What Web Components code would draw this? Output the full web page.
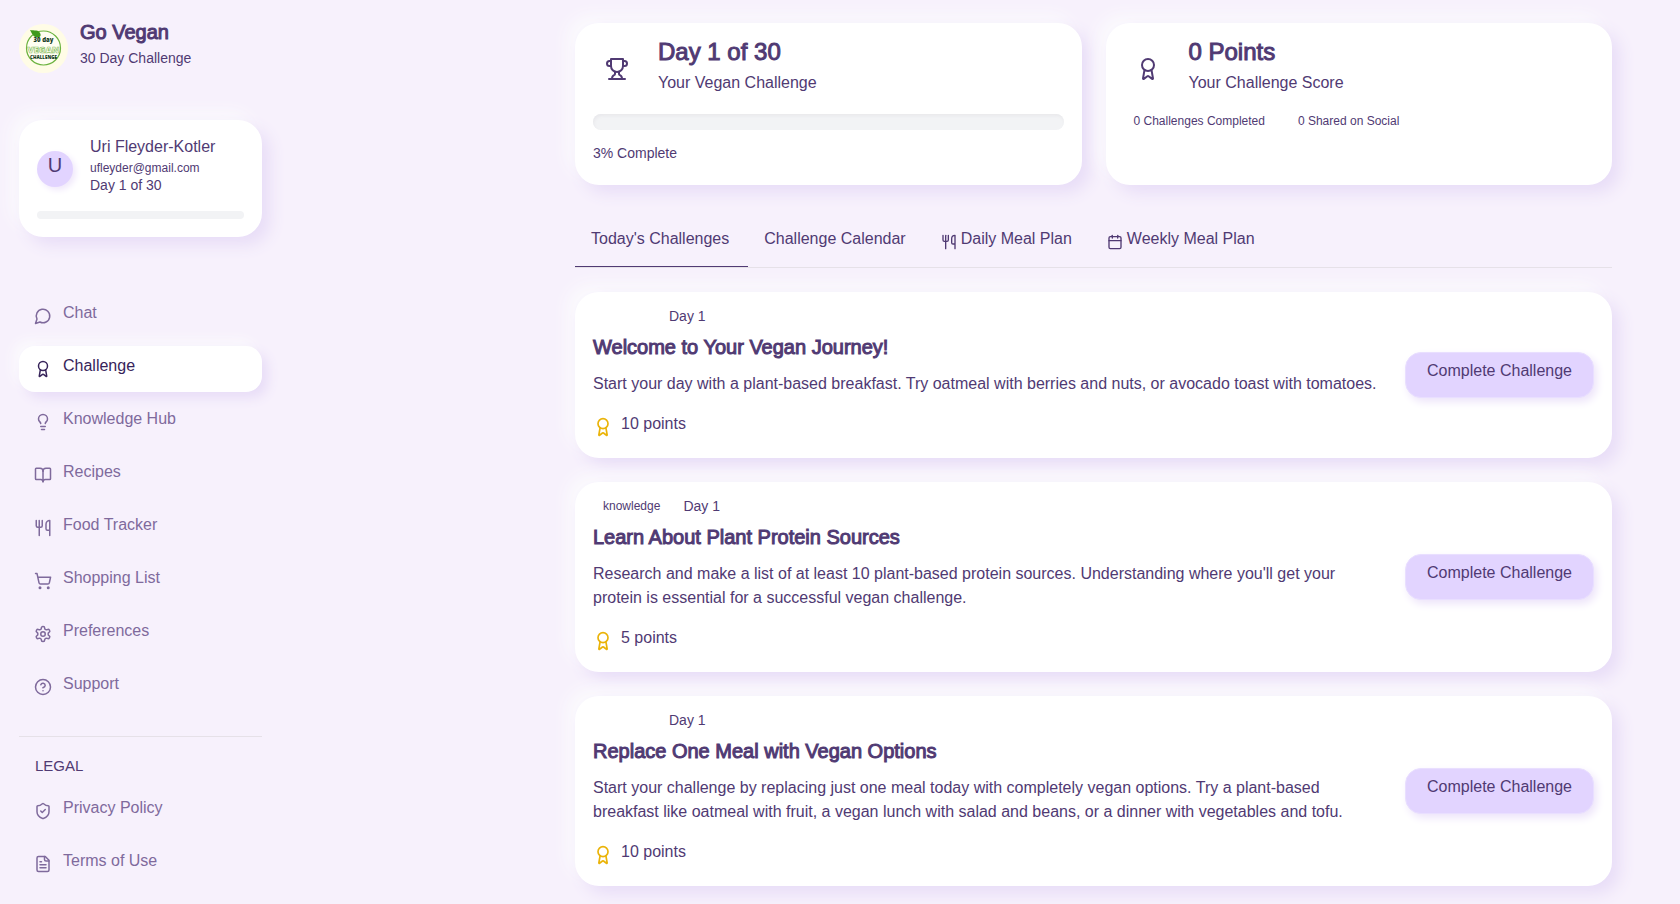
<!DOCTYPE html>
<html lang="en">
<head>
<meta charset="utf-8">
<title>Go Vegan - 30 Day Challenge</title>
<style>
	:root {
		--bg: #f7f1fc;
		--ink: #503a73;
		--ink-dark: #37245a;
		--muted: #7f6a9c;
		--accent: #e2d4ff;
		--line: #e6e1e8;
		--track: #f2f3f5;
		--gold: #eab308;
		--raised: 8px 8px 16px #e8ddf7, -8px -8px 16px #fbfafd;
	}
	body {
		margin: 0;
		background: var(--bg);
		color: var(--ink);
		font: 16px/24px "Liberation Sans", Arial, sans-serif;
		overflow: hidden;
	}
</style>
</head>
<body>
<vegan-app>
	<app-sidebar slot="sidebar">
		<profile-card slot="profile" initial="U" email="ufleyder@gmail.com" day="Day 1 of 30">Uri Fleyder-Kotler</profile-card>
		<nav-item icon="chat">Chat</nav-item>
		<nav-item icon="award" active>Challenge</nav-item>
		<nav-item icon="bulb">Knowledge Hub</nav-item>
		<nav-item icon="book">Recipes</nav-item>
		<nav-item icon="utensils">Food Tracker</nav-item>
		<nav-item icon="cart">Shopping List</nav-item>
		<nav-item icon="settings">Preferences</nav-item>
		<nav-item icon="help">Support</nav-item>
		<nav-item slot="legal" icon="shield">Privacy Policy</nav-item>
		<nav-item slot="legal" icon="file">Terms of Use</nav-item>
	</app-sidebar>

	<stat-card slot="stats" icon="trophy" heading="Day 1 of 30" label="Your Vegan Challenge">
		<progress-track></progress-track>
		<small-note>3% Complete</small-note>
	</stat-card>
	<stat-card slot="stats" icon="award" heading="0 Points" label="Your Challenge Score">
		<badge-row>
			<pill-badge>0 Challenges Completed</pill-badge>
			<pill-badge>0 Shared on Social</pill-badge>
		</badge-row>
	</stat-card>

	<tab-bar slot="tabs">
		<tab-item active>Today's Challenges</tab-item>
		<tab-item>Challenge Calendar</tab-item>
		<tab-item icon="utensils">Daily Meal Plan</tab-item>
		<tab-item icon="calendar">Weekly Meal Plan</tab-item>
	</tab-bar>

	<challenge-card heading="Welcome to Your Vegan Journey!" day="Day 1" points="10 points">Start your day with a plant-based breakfast. Try oatmeal with berries and nuts, or avocado toast with tomatoes.</challenge-card>
	<challenge-card category="knowledge" heading="Learn About Plant Protein Sources" day="Day 1" points="5 points">Research and make a list of at least 10 plant-based protein sources. Understanding where you'll get your protein is essential for a successful vegan challenge.</challenge-card>
	<challenge-card heading="Replace One Meal with Vegan Options" day="Day 1" points="10 points">Start your challenge by replacing just one meal today with completely vegan options. Try a plant-based breakfast like oatmeal with fruit, a vegan lunch with salad and beans, or a dinner with vegetables and tofu.</challenge-card>
</vegan-app>

<script>
// 24x24 stroke icons
const ICONS = {
	chat: '<path d="M7.9 20A9 9 0 1 0 4 16.1L2 22Z"/>',
	award: '<circle cx="12" cy="8" r="6"/><path d="m15.477 12.89 1.515 8.526a.5.5 0 0 1-.81.47l-3.58-2.687a1 1 0 0 0-1.197 0l-3.586 2.686a.5.5 0 0 1-.81-.469l1.514-8.526"/>',
	bulb: '<path d="M15 14c.2-1 .7-1.7 1.5-2.5 1-.9 1.5-2.2 1.5-3.5A6 6 0 0 0 6 8c0 1 .2 2.2 1.5 3.5.7.7 1.3 1.5 1.5 2.5"/><path d="M9 18h6"/><path d="M10 22h4"/>',
	book: '<path d="M12 7v14"/><path d="M3 18a1 1 0 0 1-1-1V4a1 1 0 0 1 1-1h5a4 4 0 0 1 4 4 4 4 0 0 1 4-4h5a1 1 0 0 1 1 1v13a1 1 0 0 1-1 1h-6a3 3 0 0 0-3 3 3 3 0 0 0-3-3z"/>',
	utensils: '<path d="M3 2v7c0 1.100.9 2 2 2h4a2 2 0 0 0 2-2V2"/><path d="M7 2v20"/><path d="M21 15V2a5 5 0 0 0-5 5v6c0 1.100.9 2 2 2h3Zm0 0v7"/>',
	cart: '<circle cx="8" cy="21" r="1"/><circle cx="19" cy="21" r="1"/><path d="M2.050 2.050h2l2.660 12.420a2 2 0 0 0 2 1.580h9.780a2 2 0 0 0 1.950-1.570l1.650-7.430H5.120"/>',
	settings: '<path d="M12.220 2h-.44a2 2 0 0 0-2 2v.18a2 2 0 0 1-1 1.730l-.43.25a2 2 0 0 1-2 0l-.15-.08a2 2 0 0 0-2.730.73l-.22.38a2 2 0 0 0 .73 2.730l.15.1a2 2 0 0 1 1 1.720v.51a2 2 0 0 1-1 1.740l-.15.09a2 2 0 0 0-.73 2.730l.22.38a2 2 0 0 0 2.730.73l.15-.08a2 2 0 0 1 2 0l.43.25a2 2 0 0 1 1 1.730V20a2 2 0 0 0 2 2h.44a2 2 0 0 0 2-2v-.18a2 2 0 0 1 1-1.730l.43-.25a2 2 0 0 1 2 0l.15.08a2 2 0 0 0 2.730-.73l.22-.39a2 2 0 0 0-.73-2.730l-.15-.08a2 2 0 0 1-1-1.740v-.5a2 2 0 0 1 1-1.740l.15-.09a2 2 0 0 0 .73-2.730l-.22-.38a2 2 0 0 0-2.730-.73l-.15.08a2 2 0 0 1-2 0l-.43-.25a2 2 0 0 1-1-1.730V4a2 2 0 0 0-2-2z"/><circle cx="12" cy="12" r="3"/>',
	help: '<circle cx="12" cy="12" r="10"/><path d="M9.090 9a3 3 0 0 1 5.830 1c0 2-3 3-3 3"/><path d="M12 17h.01"/>',
	shield: '<path d="M20 13c0 5-3.500 7.500-7.660 8.950a1 1 0 0 1-.67-.01C7.500 20.500 4 18 4 13V6a1 1 0 0 1 1-1c2 0 4.500-1.200 6.240-2.720a1.170 1.170 0 0 1 1.520 0C14.510 3.810 17 5 19 5a1 1 0 0 1 1 1z"/><path d="m9 12 2 2 4-4"/>',
	file: '<path d="M15 2H6a2 2 0 0 0-2 2v16a2 2 0 0 0 2 2h12a2 2 0 0 0 2-2V7Z"/><path d="M14 2v4a2 2 0 0 0 2 2h4"/><path d="M10 9H8"/><path d="M16 13H8"/><path d="M16 17H8"/>',
	trophy: '<path d="M6 9H4.500a2.500 2.500 0 0 1 0-5H6"/><path d="M18 9h1.500a2.500 2.500 0 0 0 0-5H18"/><path d="M4 22h16"/><path d="M10 14.660V17c0 .55-.47.98-.97 1.210C7.850 18.750 7 20.240 7 22"/><path d="M14 14.660V17c0 .55.47.98.97 1.210C16.150 18.750 17 20.240 17 22"/><path d="M18 2H6v7a6 6 0 0 0 12 0V2Z"/>',
	calendar: '<path d="M8 2v4"/><path d="M16 2v4"/><rect width="18" height="18" x="3" y="4" rx="2"/><path d="M3 10h18"/>',
};

function icon(name, size) {
	return `<svg width="${size}" height="${size}" viewBox="0 0 24 24" fill="none" stroke="currentColor" stroke-width="2" stroke-linecap="round" stroke-linejoin="round" aria-hidden="true">${ICONS[name]}</svg>`;
}

// sets up the shadow root from whatever render() returns
class BaseElement extends HTMLElement {
	constructor() {
		super();
		this.attachShadow({ mode: "open" });
	}
	connectedCallback() {
		this.shadowRoot.innerHTML = this.render();
	}
	attr(name) {
		return this.getAttribute(name) || "";
	}
}

class VeganApp extends BaseElement {
	render() {
		return `
			<style>
				:host {
					display: flex;
					min-height: 100vh;
				}
				main {
					flex: 1;
					min-width: 0;
					padding: 23px 68px 24px 294px;
				}
				.stats {
					display: grid;
					grid-template-columns: 1fr 1fr;
					gap: 24px;
				}
				.list {
					display: flex;
					flex-direction: column;
					gap: 24px;
					margin-top: 24px;
				}
			</style>
			<slot name="sidebar"></slot>
			<main>
				<div class="stats"><slot name="stats"></slot></div>
				<slot name="tabs"></slot>
				<div class="list"><slot></slot></div>
			</main>
			`;
	}
}

class AppSidebar extends BaseElement {
	render() {
		return `
			<style>
				:host {
					display: block;
					box-sizing: border-box;
					width: 281px;
					padding: 20px 19px 0;
				}
				.brand {
					display: flex;
					align-items: center;
					gap: 12px;
				}
				.brand svg {
					margin-top: 2px;
				}
				h1 {
					margin: 0 0 2px;
					font-size: 20px;
					font-weight: 400;
					-webkit-text-stroke: 1px;
				}
				p {
					margin: 0;
					padding-bottom: 4px;
					font-size: 14px;
				}
				nav {
					display: flex;
					flex-direction: column;
					gap: 7px;
					margin-top: 56px;
				}
				hr {
					margin: 26px 0 17px;
					border: 0;
					border-top: 1px solid var(--line);
				}
				h2 {
					margin: 0;
					padding-left: 16px;
					font-size: 15px;
					font-weight: 400;
				}
				nav.legal {
					margin-top: 10px;
				}
			</style>
			<div class="brand">
				<svg width="49" height="49" viewBox="0 0 49 49" role="img" aria-label="30 day vegan challenge">
					<circle cx="24.500" cy="24.500" r="24.500" fill="#fffce6"/>
					<circle cx="24.500" cy="24" r="17" fill="#fffef2" stroke="#6cb33f" stroke-width="1.200"/>
					<path d="M11 6c4 1 9-1 10.500 4 .5 2-.5 3-2 3.500C14 14 13 9 11 6z" fill="#3f9a1d"/>
					<g font-family="Open Sans, sans-serif" text-anchor="middle" font-weight="800">
						<text x="24.500" y="18" font-size="6" fill="#123a1c">30 day</text>
						<text x="24.500" y="28.500" font-size="9" fill="#fffef2" stroke="#8fc26a" stroke-width=".7">VEGAN</text>
						<text x="24.500" y="35" font-size="4.500" fill="#123a1c">CHALLENGE</text>
					</g>
				</svg>
				<div>
					<h1>Go Vegan</h1>
					<p>30 Day Challenge</p>
				</div>
			</div>
			<slot name="profile"></slot>
			<nav aria-label="Main"><slot></slot></nav>
			<hr>
			<h2>LEGAL</h2>
			<nav class="legal" aria-label="Legal"><slot name="legal"></slot></nav>
			`;
	}
}

class ProfileCard extends BaseElement {
	render() {
		return `
			<style>
				:host {
					display: block;
					margin-top: 46px;
					padding: 15px 18px 18px;
					border-radius: 24px;
					background: #fff;
					box-shadow: var(--raised);
				}
				.row {
					display: flex;
					align-items: center;
					gap: 17px;
				}
				.avatar {
					width: 36px;
					height: 36px;
					margin-top: 10px;
					border-radius: 50%;
					background: var(--accent);
					box-shadow: 3px 3px 6px #f0e8fb;
					font-size: 20px;
					line-height: 28px;
					text-align: center;
				}
				.email {
					font-size: 12px;
					line-height: 18px;
				}
				.day {
					font-size: 14px;
					line-height: 16px;
				}
				progress-track {
					--size: 8px;
					--inset: none;
					margin-top: 18px;
				}
			</style>
			<div class="row">
				<div class="avatar">${this.attr("initial")}</div>
				<div>
					<div><slot></slot></div>
					<div class="email">${this.attr("email")}</div>
					<div class="day">${this.attr("day")}</div>
				</div>
			</div>
			<progress-track></progress-track>
			`;
	}
}

class ProgressTrack extends BaseElement {
	render() {
		return `
			<style>
				:host {
					display: block;
					height: var(--size, 16px);
					border-radius: 8px;
					background: var(--track);
					box-shadow: var(--inset, inset 1px 2px 3px #e9e9ec);
				}
			</style>
			`;
	}
}

class NavItem extends BaseElement {
	render() {
		return `
			<style>
				:host {
					display: block;
				}
				a {
					display: flex;
					align-items: center;
					gap: 11px;
					height: 46px;
					padding: 0 15px;
					border-radius: 16px;
					color: var(--muted);
					text-decoration: none;
				}
				:host([active]) a {
					background: #fff;
					color: var(--ink-dark);
					box-shadow: 6px 6px 12px #e8ddf7, -6px -6px 12px #fbfafd;
				}
				span {
					padding-bottom: 7px;
				}
			</style>
			<a href="#"${this.hasAttribute("active") ? ' aria-current="page"' : ""}>${icon(this.attr("icon"), 18)}<span><slot></slot></span></a>
			`;
	}
}

class StatCard extends BaseElement {
	render() {
		return `
			<style>
				:host {
					display: block;
					box-sizing: border-box;
					min-height: 162px;
					padding: 13px 18px 18px;
					border-radius: 24px;
					background: #fff;
					box-shadow: var(--raised);
				}
				.top {
					display: flex;
					align-items: center;
					gap: 17px;
					margin-bottom: 16px;
				}
				.icon {
					display: flex;
					justify-content: center;
					width: 48px;
					padding-top: 4px;
				}
				h2 {
					margin: 0;
					font-size: 24px;
					line-height: 32px;
					font-weight: 400;
					-webkit-text-stroke: 1px;
				}
				p {
					margin: 0;
					line-height: 30px;
				}
			</style>
			<div class="top">
				<div class="icon">${icon(this.attr("icon"), 24)}</div>
				<div>
					<h2>${this.attr("heading")}</h2>
					<p>${this.attr("label")}</p>
				</div>
			</div>
			<slot></slot>
			`;
	}
}

class SmallNote extends BaseElement {
	render() {
		return `
			<style>
				:host {
					display: block;
					margin-top: 11px;
					font-size: 14px;
				}
			</style>
			<slot></slot>
			`;
	}
}

class BadgeRow extends BaseElement {
	render() {
		return `
			<style>
				:host {
					display: flex;
					gap: 13px;
				}
			</style>
			<slot></slot>
			`;
	}
}

class PillBadge extends BaseElement {
	render() {
		return `
			<style>
				:host {
					display: block;
					padding: 0 10px;
					font-size: 12px;
					line-height: 14px;
				}
			</style>
			<slot></slot>
			`;
	}
}

class TabBar extends BaseElement {
	render() {
		return `
			<style>
				:host {
					display: flex;
					margin-top: 36px;
					border-bottom: 1px solid var(--line);
				}
			</style>
			<slot></slot>
			`;
	}
}

class TabItem extends BaseElement {
	render() {
		const name = this.attr("icon");
		return `
			<style>
				:host {
					display: block;
				}
				button {
					display: flex;
					align-items: center;
					gap: 4px;
					height: 46px;
					padding: 0 19px 0 16px;
					border: 0;
					border-bottom: 1px solid transparent;
					background: none;
					color: inherit;
					font: inherit;
				}
				:host([active]) button {
					border-color: var(--ink);
				}
				span {
					padding-bottom: 10px;
				}
				svg {
					margin-bottom: 4px;
				}
			</style>
			<button type="button">${name ? icon(name, 16) : ""}<span><slot></slot></span></button>
			`;
	}
}

class ChallengeCard extends BaseElement {
	render() {
		return `
			<style>
				:host {
					display: flex;
					align-items: center;
					gap: 18px;
					padding: 0 18px;
					border-radius: 24px;
					background: #fff;
					box-shadow: var(--raised);
				}
				.body {
					flex: 1;
					min-width: 0;
					padding: 12px 0 21px;
				}
				.meta {
					display: flex;
					align-items: center;
					gap: 13px;
					font-size: 14px;
				}
				.meta pill-badge {
					min-width: 43px;
				}
				h3 {
					margin: 5px 0 11px;
					font-size: 20px;
					line-height: 28px;
					font-weight: 400;
					-webkit-text-stroke: 1px;
				}
				p {
					margin: 0 0 16px;
				}
				.points {
					display: flex;
					align-items: flex-start;
					gap: 8px;
				}
				.points svg {
					margin-top: 5px;
					color: var(--gold);
				}
				button {
					height: 46px;
					padding: 0 21px 9px;
					border: 1px solid #e9dfff;
					border-radius: 16px;
					background: var(--accent);
					box-shadow: 3px 4px 8px #ede4fa;
					color: inherit;
					font: inherit;
					white-space: nowrap;
				}
			</style>
			<div class="body">
				<div class="meta"><pill-badge>${this.attr("category")}</pill-badge><span>${this.attr("day")}</span></div>
				<h3>${this.attr("heading")}</h3>
				<p><slot></slot></p>
				<div class="points">${icon("award", 20)}<span>${this.attr("points")}</span></div>
			</div>
			<button type="button">Complete Challenge</button>
			`;
	}
}

customElements.define("progress-track", ProgressTrack);
customElements.define("small-note", SmallNote);
customElements.define("badge-row", BadgeRow);
customElements.define("pill-badge", PillBadge);
customElements.define("nav-item", NavItem);
customElements.define("profile-card", ProfileCard);
customElements.define("app-sidebar", AppSidebar);
customElements.define("stat-card", StatCard);
customElements.define("tab-item", TabItem);
customElements.define("tab-bar", TabBar);
customElements.define("challenge-card", ChallengeCard);
customElements.define("vegan-app", VeganApp);
</script>
</body>
</html>
